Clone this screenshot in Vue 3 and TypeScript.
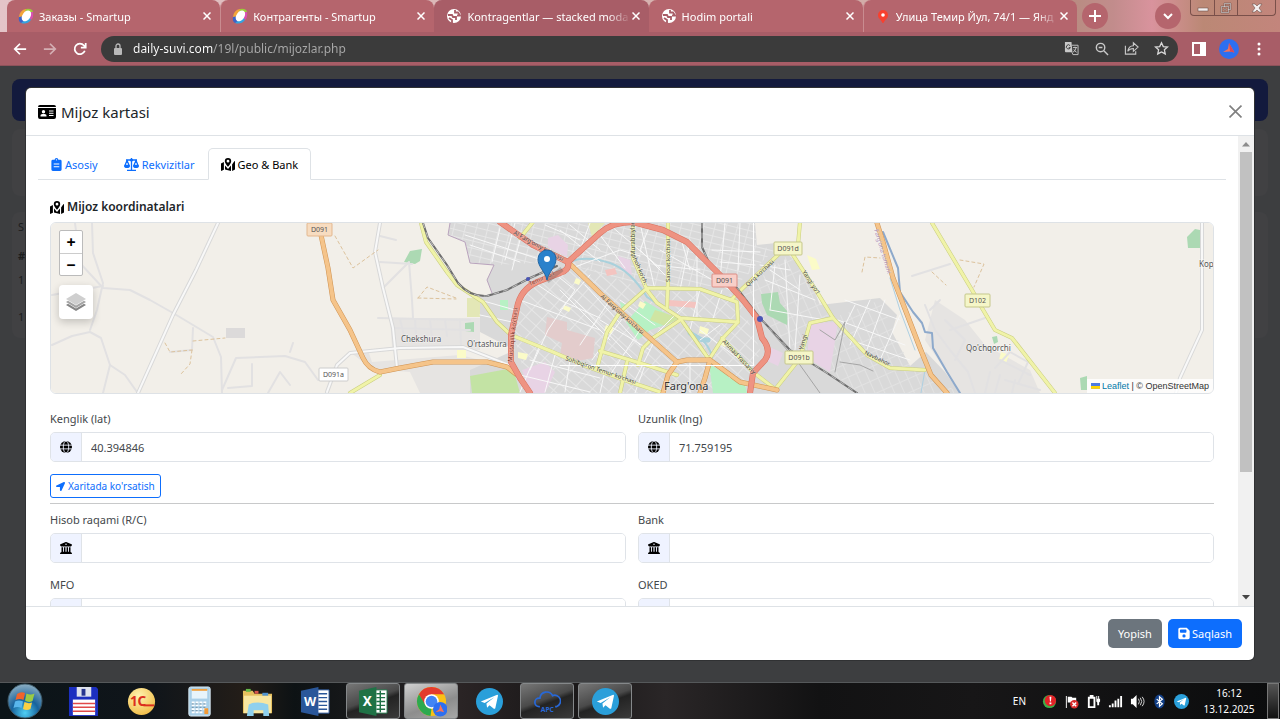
<script setup lang="ts">
import { ref } from 'vue'

interface BrowserTab { title: string; icon: 'smartup' | 'globe' | 'pin'; active?: boolean }
interface Shield { text: string; x: number; y: number; w: number; fill: string; stroke: string }
interface Street { text: string; x: number; y: number; angle: number; color?: string }

const browserTabs: BrowserTab[] = [
  { title: 'Заказы - Smartup', icon: 'smartup' },
  { title: 'Контрагенты - Smartup', icon: 'smartup' },
  { title: 'Kontragentlar — stacked moda', icon: 'globe', active: true },
  { title: 'Hodim portali', icon: 'globe' },
  { title: 'Улица Темир Йул, 74/1 — Янд', icon: 'pin' },
]

const url = ref('daily-suvi.com/19l/public/mijozlar.php')
const lat = ref('40.394846')
const lng = ref('71.759195')
const account = ref('')
const bank = ref('')
const mfo = ref('')
const oked = ref('')

const sections = [
  { id: 'main', label: 'Asosiy', icon: 'i-clipboard', w: 11 },
  { id: 'req', label: 'Rekvizitlar', icon: 'i-scale', w: 15 },
  { id: 'geo', label: 'Geo & Bank', icon: 'i-map', w: 14 },
]
const current = ref('geo')

const farmland = [
  'M92 223L93 253L103 283L97 310L90 330',
  'M75 223L80 263L103 288L130 290L150 300L173 313L213 337L221 357L222 393',
  'M52 345L72 336L90 332L101 338L110 365L125 375L137 392',
  'M110 365L103 393M52 295L103 286M193 328L192 350L170 352',
  'M222 390L236 358L285 356L305 362L318 380M252 364L252 386L228 388M268 393L280 372L290 385M290 352L293 343',
  'M383 288L409 262L412 300L413 318M380 262L412 264M380 236L396 240M378 318L470 320M400 319L405 340M415 319L416 336M430 320L432 338M445 320L447 336M460 320L461 345M392 328L470 330',
  'M912 276L950 264M995 368L1010 352L1028 362L1018 384M1000 360L1030 375M1005 380L1040 390M990 372L985 393M1000 375L995 393M1015 380L1012 393',
  'M925 305L935 330L950 350L968 372L975 393M945 320L965 340L955 360M930 345L945 365M930 310L940 300M950 330L985 318',
]
const whiteRoads = [
  'M218 223L196 270L173 315L138 393',
  'M380 223L375 252L383 288L393 328L397 368',
  'M327 392L337 365L350 353L400 348L463 347L512 366',
  'M1202 223V330L1180 378L1176 393',
]
const cityStreets = [
  'M470 245L520 262M465 235L548 262M500 228L492 262M520 240L512 270M538 285L560 300L600 318M520 300L600 330',
  'M555 274L575 290L548 330L530 370M575 267L620 250L640 256M590 223L577 258M600 235L625 268M610 225L660 268',
  'M640 223L655 290M650 225L640 250L665 275M655 265L700 270M680 235L690 270M690 240L680 290M697 255L697 320',
  'M700 289L690 330M722 290L712 322M660 250L730 290M712 250L760 252M720 262L755 265M725 223L720 280M740 223L738 270',
  'M585 285L640 345M575 300L632 358M590 275L560 310M610 300L580 345M625 315L592 360M640 330L610 375M655 340L635 380',
  'M560 290L610 340M620 300L655 325M600 320L650 350M650 340L690 300M690 362L690 392M700 340L720 325M700 330L740 360M690 335L730 378',
  'M540 345L520 392M555 355L545 392M570 360L565 392M530 360L600 378M520 375L590 392M605 370L600 393M645 365L635 393',
  'M770 270L800 290M765 280L815 300M785 260L790 350M800 275L795 350M770 310L825 320M760 265L790 270M775 265L770 310',
  'M845 300L900 320M838 320L905 345M850 340L910 360M855 305L840 335M870 300L850 345M885 300L865 355M900 315L880 360',
  'M480 300L515 310M480 315L512 322M515 223L505 260M570 225L600 250M560 230L600 262M545 225L580 240',
]
const yellowRoads = [
  'M421 223L426 242L447 272L457 285L483 302L497 322L511 335L553 352L583 365L633 383L663 393',
  'M520 238L533 222',
  'M380 375L350 393',
  'M633 222L633 258L647 290L657 303L680 318L738 322L737 302L700 289L647 288L620 312L607 332L602 350L597 368',
  'M668 222V282L667 308',
  'M680 318L708 358M738 322L723 338L710 358',
  'M680 320L653 338L643 348L638 365M600 351L640 363L677 375M627 362L620 393',
  'M731 300L743 288L780 253',
  'M800 222L798 245L793 255L817 292L833 318L867 355L890 368L925 370',
  'M833 318L810 323L800 358L777 387',
  'M722 338L753 372L775 389',
  'M932 223L972 290L982 308L995 330L1012 338L1037 370L1055 393',
]
const orangeRoads = [
  'M317 222L321 235L328 268L333 300L350 330L363 358Q368 369 380 372L400 368L433 362H487L507 367L516 374',
  'M571 265L600 293L643 332L677 362L687 360H710L740 382L777 390',
  'M677 362L668 375L663 393M710 360L705 378L700 393',
  'M877 223L883 242L893 278L910 322L920 348L931 375L947 393',
]
const redRoads = [
  'M500 222L533 245L568 262L600 233Q612 222 633 222L663 230L687 242L703 258L723 278L743 300L757 318L762 338Q772 350 765 360L753 373L750 393',
  'M568 262Q570 270 560 273L537 282Q520 290 517 308L511 335V362L520 378L530 393',
]
const railways = [
  'M423 223L428 238L447 265L458 283Q470 297 487 296L507 290L530 278L557 266',
  'M702 223V247L710 265L737 288L760 318L790 350L827 373L857 393',
]
const shields: Shield[] = [
  { text: 'D091', x: 307, y: 223, w: 25, fill: '#f7dcc0', stroke: '#e3b78e' },
  { text: 'D091a', x: 319, y: 368, w: 29, fill: '#fff', stroke: '#ccc' },
  { text: 'D091', x: 712, y: 274, w: 25, fill: '#f8cfc8', stroke: '#dc8d84' },
  { text: 'D091d', x: 774, y: 242, w: 28, fill: '#f5f6c8', stroke: '#c5c78b' },
  { text: 'D091b', x: 785, y: 351, w: 28, fill: '#f5f6c8', stroke: '#c5c78b' },
  { text: 'D102', x: 965, y: 294, w: 25, fill: '#f5f6c8', stroke: '#c5c78b' },
]
const streets: Street[] = [
  { text: "Al Farg'oniy ko'chasi", x: 513, y: 234, angle: 29 },
  { text: "Al Farg'oniy ko'chasi", x: 600, y: 297, angle: 42 },
  { text: "Mustaqillik ko'chasi", x: 512, y: 362, angle: -84, color: '#7d3226' },
  { text: "Temir Yo'l", x: 530, y: 286, angle: -24, color: '#7d3226' },
  { text: "Sohibqiron Temur ko'chasi", x: 565, y: 360, angle: 19 },
  { text: "Sanoat ko'chasi", x: 670, y: 282, angle: -90 },
  { text: 'Murabbiylar', x: 635, y: 256, angle: -91 },
  { text: "shoh ko'ch.", x: 632, y: 256, angle: 67 },
  { text: "Qirq ko'chasi", x: 748, y: 287, angle: -43 },
  { text: 'Ahmad Yassaviy', x: 722, y: 342, angle: 46 },
  { text: "Yangi yo'l", x: 802, y: 272, angle: 57 },
  { text: 'Yangi', x: 803, y: 350, angle: -75 },
  { text: 'Navbahor', x: 864, y: 354, angle: 26 },
  { text: "Farg'ona tumani", x: 874, y: 230, angle: 73, color: '#a98bb8' },
]
</script>

<template>
  <svg class="sprite" aria-hidden="true">
    <symbol id="i-idcard" viewBox="0 0 18 14">
      <path fill-rule="evenodd" d="M2 0h14a2 2 0 0 1 2 2H0a2 2 0 0 1 2-2zM0 3h18v9a2 2 0 0 1-2 2H2a2 2 0 0 1-2-2zM5.500 5a1.700 1.700 0 1 0 0 3.400 1.700 1.700 0 0 0 0-3.400zM2.500 11.500h6a2.200 2.200 0 0 0-2.200-2.400H4.700a2.200 2.200 0 0 0-2.200 2.400zM11 5.500v1h4.500v-1zM11 7.700v1h4.500v-1zM11 9.900v1h4.500v-1z" />
    </symbol>
    <symbol id="i-clipboard" viewBox="0 0 11 14">
      <path fill-rule="evenodd" d="M1.500 2h2a2 2 0 0 1 4 0h2A1.500 1.500 0 0 1 11 3.500v9A1.500 1.500 0 0 1 9.500 14h-8A1.500 1.500 0 0 1 0 12.500v-9A1.500 1.500 0 0 1 1.500 2zM5.500 1.300a.7.7 0 1 0 0 1.400.7.7 0 0 0 0-1.400zM2.500 6v1h6V6zM2.500 9v1h6V9z" />
    </symbol>
    <symbol id="i-scale" viewBox="0 0 15 13">
      <path fill="none" stroke="currentColor" stroke-width="1.300" d="M7.500 0v12M3 12.300h9M2 2h11M3 2.500L.9 7.500h4.300zM12 2.500L9.800 7.500h4.300z" />
      <path d="M0 7.500h6a3 2.600 0 0 1-6 0zM9 7.500h6a3 2.600 0 0 1-6 0z" /><circle cx="7.500" cy="2" r="1.600" />
    </symbol>
    <symbol id="i-map" viewBox="0 0 14 13">
      <path d="M0 5.500L2.900 4v7.800L.7 12.800a.5.5 0 0 1-.7-.4zM14 3.500v8L11.100 13V6.500l2.200-3.300a.5.500 0 0 1 .7.300z" />
      <path d="M4 7.500L7 11l3-3.500V13l-6-1.500z" />
      <path fill-rule="evenodd" d="M7 0a3.200 3.200 0 0 1 3.200 3.200C10.200 5 8 7.500 7 8.700 6 7.500 3.800 5 3.800 3.200A3.200 3.200 0 0 1 7 0zm0 1.800a1.400 1.400 0 1 0 0 2.800A1.400 1.400 0 0 0 7 1.800z" />
    </symbol>
    <symbol id="i-globe" viewBox="0 0 16 16">
      <circle cx="8" cy="8" r="8" /><g fill="none" stroke="#eff3ff" stroke-width="1.200"><ellipse cx="8" cy="8" rx="3.600" ry="8" /><path d="M0 5.500h16M0 10.500h16" /></g>
    </symbol>
    <symbol id="i-bank" viewBox="0 0 512 512">
      <path d="M243.400 2.600l-224 96c-14 6-21.800 21-18.700 35.800S16.800 160 32 160v8c0 13.300 10.700 24 24 24H456c13.300 0 24-10.700 24-24v-8c15.200 0 28.300-10.700 31.300-25.600s-4.800-29.900-18.700-35.800l-224-96c-8-3.400-17.200-3.400-25.200 0zM128 224H64V420.300c-.6 .3-1.200 .7-1.800 1.100l-48 32c-11.700 7.800-17 22.400-12.900 35.900S17.900 512 32 512H480c14.100 0 26.500-9.200 30.600-22.700s-1.100-28.100-12.900-35.900l-48-32c-.6-.4-1.200-.7-1.800-1.100V224H384V416H344V224H280V416H232V224H168V416H128V224zM256 64a32 32 0 1 1 0 64 32 32 0 1 1 0-64z" />
    </symbol>
    <symbol id="i-arrow" viewBox="0 0 512 512">
      <path d="M444.520 3.520L28.740 195.420c-47.970 22.390-31.980 92.750 19.190 92.750h175.910v175.910c0 51.170 70.360 67.170 92.750 19.190l191.900-415.780c15.990-38.390-25.590-79.970-63.970-63.970z" />
    </symbol>
    <symbol id="i-save" viewBox="0 0 448 512">
      <path d="M64 32C28.700 32 0 60.700 0 96V416c0 35.300 28.700 64 64 64H384c35.300 0 64-28.700 64-64V173.300c0-17-6.700-33.300-18.700-45.300L352 50.700C340 38.700 323.700 32 306.700 32H64zm0 96c0-17.700 14.300-32 32-32H288c17.700 0 32 14.300 32 32v64c0 17.700-14.300 32-32 32H96c-17.700 0-32-14.300-32-32V128zM224 288a64 64 0 1 1 0 128 64 64 0 1 1 0-128z" />
    </symbol>
    <symbol id="i-smartup" viewBox="0 0 16 16">
      <path fill="#f2a53a" d="M1 9A8 8 0 0 1 8 1l1 3-5 6z" /><path fill="#9ccb3b" d="M8 1q6-1 7 3l-4 2-4-2z" /><path fill="#d84fb0" d="M15 4q1 5-2 8l-3-3 2-5z" /><path fill="#35a3e0" d="M13 12q-4 5-10 3l3-5 5-1z" /><path fill="#3c63c8" d="M3 15q-3-2-2-6l5-1 1 4z" />
      <ellipse cx="8.300" cy="7.700" rx="4" ry="6" fill="#fff" transform="rotate(35 8 8)" />
    </symbol>
    <symbol id="i-world" viewBox="0 0 16 16">
      <circle cx="8" cy="8" r="7" fill="#fff" /><path fill="none" stroke="#a85d67" stroke-width="1.800" d="M2 7h4l1 2h3v3M6 15v-3L3 10M9 2v2.500h3l2 3h-3" />
    </symbol>
    <symbol id="i-pin" viewBox="0 0 16 16">
      <path fill="#f8402f" d="M8 2a5 5 0 0 1 5 5c0 4-3 4-4.500 8h-1C6 11 3 11 3 7a5 5 0 0 1 5-5z" /><circle cx="8" cy="7" r="1.800" fill="#fff" />
    </symbol>
    <symbol id="i-telegram" viewBox="0 0 28 28">
      <circle cx="14" cy="14" r="14" fill="#2a9fda" /><path fill="#fff" d="M5 14L22 7q1 0 .8 1L20 21q-.5 1-1.500.4L14 18l-2.500 2.500-.7-4.500L19 9.500 9 15.500z" />
    </symbol>
  </svg>

  <div class="screen">
    <header class="tabstrip">
      <div class="tabs" role="tablist" aria-label="Browser tabs">
        <div v-for="tab in browserTabs" :key="tab.title" class="tab" :class="{ active: tab.active }" role="tab" :aria-selected="!!tab.active">
          <svg class="favicon" aria-hidden="true"><use :href="tab.icon === 'smartup' ? '#i-smartup' : tab.icon === 'pin' ? '#i-pin' : '#i-world'" /></svg>
          <span class="tab-title">{{ tab.title }}</span>
          <button class="tab-close" aria-label="Close tab"><svg viewBox="0 0 8 8"><path d="M.5.500l7 7M7.500.500l-7 7" /></svg></button>
        </div>
      </div>
      <button class="round" aria-label="New tab"><svg viewBox="0 0 12 12"><path d="M6 0v12M0 6h12" /></svg></button>
      <div class="spacer"></div>
      <button class="round" aria-label="Search tabs"><svg viewBox="0 0 12 12"><path d="M2 4l4 4 4-4" /></svg></button>
      <div class="window-controls">
        <button aria-label="Minimize"><svg viewBox="0 0 12 12"><rect x="1" y="6" width="10" height="3" /></svg></button>
        <button aria-label="Restore"><svg viewBox="0 0 12 12"><path fill-rule="evenodd" d="M4 1h7v7H9v3H1V4h3zm1 1v2h4v3h1V2zM2 5v5h6V5zm2 2h2v1H4z" /></svg></button>
        <button class="wide" aria-label="Close"><svg viewBox="0 0 12 12"><path d="M1 2h3l2 2 2-2h3L8 6l3 4H8L6 8l-2 2H1l3-4z" /></svg></button>
      </div>
    </header>

    <nav class="toolbar" aria-label="Browser toolbar">
      <button class="nav" aria-label="Back"><svg viewBox="0 0 16 16"><path d="M15 8H2M8 2L2 8l6 6" /></svg></button>
      <button class="nav dim" aria-label="Forward"><svg viewBox="0 0 16 16"><path d="M1 8h13M8 2l6 6-6 6" /></svg></button>
      <button class="nav" aria-label="Reload"><svg viewBox="0 0 16 16"><path d="M13.500 10A6 6 0 1 1 12.500 4L14 6M14.500 1v5.500H9" /></svg></button>
      <div class="omnibox">
        <svg class="lock" viewBox="0 0 10 12" aria-hidden="true"><rect x="1" y="5" width="8" height="7" rx="1" fill="#b9b9b9" /><path d="M3 5V3a2 2 0 0 1 4 0v2" fill="none" stroke="#b9b9b9" stroke-width="1.300" /></svg>
        <input v-model="url" class="url" aria-label="Address" />
        <button aria-label="Translate"><svg viewBox="0 0 16 16"><path fill="#c8c8c8" d="M1 1h7l1 11H2a1 1 0 0 1-1-1z" /><path fill="none" stroke="#c8c8c8" d="M8.500 4.500H15v10H9.500L8.500 12" /><path fill="none" stroke="#3b3b3b" d="M6.500 5A2.200 2.200 0 1 0 6.800 7H5" /><path fill="none" stroke="#c8c8c8" d="M9.500 7h4.500M11.700 6v1M13 7q-1 4-3.500 5M10.500 9q1 2 3 3" /></svg></button>
        <button aria-label="Zoom"><svg viewBox="0 0 16 16"><g fill="none" stroke="#c8c8c8" stroke-width="1.500"><circle cx="7" cy="7" r="4.500" /><path d="M10.500 10.500L15 15M5 7h4" /></g></svg></button>
        <button aria-label="Share"><svg viewBox="0 0 16 16"><path fill="none" stroke="#c8c8c8" stroke-width="1.200" d="M1.500 5v9h11v-3M4 11q1-6 6-6V2l5 4.500L10 11V8Q6 8 4 11z" /></svg></button>
        <button aria-label="Bookmark"><svg viewBox="0 0 16 16"><path fill="none" stroke="#d8d8d8" stroke-width="1.400" d="M8 1.800l1.900 4.100 4.500.5-3.300 3 .9 4.400L8 11.600l-4 2.200.9-4.400-3.300-3 4.500-.5z" /></svg></button>
      </div>
      <button class="tool" aria-label="Side panel"><svg viewBox="0 0 14 14"><path fill="#fff" fill-rule="evenodd" d="M0 0h14v14H0zm2 2v10h6V2z" /></svg></button>
      <button class="tool avatar" aria-label="Profile"><svg viewBox="0 0 20 20"><circle cx="10" cy="10" r="10" fill="#2d6ff0" /><path fill="#f4725c" d="M10 4l5.500 9.500L11 12.500 4 13l5-3z" /><path fill="#d5485c" d="M10 4l1 8.500 4.500 1z" /></svg></button>
      <button class="tool menu" aria-label="Menu"><svg viewBox="0 0 14 14"><g fill="#fff"><circle cx="7" cy="2" r="1.500" /><circle cx="7" cy="7" r="1.500" /><circle cx="7" cy="12" r="1.500" /></g></svg></button>
    </nav>

    <main class="viewport">
      <div class="backdrop-page" aria-hidden="true">
        <div class="site-nav"></div>
        <div class="site-card"></div>
        <div class="site-card list"><span>S</span><span class="strong">#</span><span>1</span><span class="last">1</span></div>
      </div>

      <section class="modal" role="dialog" aria-labelledby="modal-title">
        <header class="modal-header">
          <svg class="id-icon" aria-hidden="true"><use href="#i-idcard" /></svg>
          <h1 id="modal-title">Mijoz kartasi</h1>
          <button class="close" aria-label="Close"><svg viewBox="0 0 12 12"><path d="M.5.500l11 11M11.500.500l-11 11" /></svg></button>
        </header>

        <div class="modal-middle">
          <div class="modal-body">
            <div class="section-tabs" role="tablist">
              <button v-for="s in sections" :key="s.id" role="tab" class="section-tab" :class="{ on: current === s.id }" :aria-selected="current === s.id" @click="current = s.id">
                <svg :style="{ width: s.w + 'px' }" aria-hidden="true"><use :href="'#' + s.icon" /></svg>{{ s.label }}
              </button>
            </div>

            <div class="pane">
              <h2><svg aria-hidden="true"><use href="#i-map" /></svg>Mijoz koordinatalari</h2>

              <div class="map">
                <svg class="map-art" viewBox="51 223 1162 170" preserveAspectRatio="xMidYMid slice" role="img" aria-label="Farg'ona">
                  <defs>
                    <pattern id="grid-a" width="11" height="7" patternUnits="userSpaceOnUse" patternTransform="rotate(14)"><path d="M0 .500h11M.5 0v7" stroke="#e6e6e6" fill="none" /></pattern>
                    <pattern id="grid-b" width="14" height="9" patternUnits="userSpaceOnUse" patternTransform="rotate(42)"><path d="M0 .500h14M.5 0v9" stroke="#e6e6e6" fill="none" /></pattern>
                    <pattern id="grid-c" width="9" height="13" patternUnits="userSpaceOnUse" patternTransform="rotate(-24)"><path d="M0 .500h9M.5 0v13" stroke="#e2e2e2" fill="none" /></pattern>
                  </defs>
                  <rect x="0" y="180" width="1280" height="260" fill="#f2efe9" />
                  <path fill="#e6e4e2" d="M390 318H480V350H368L372 362L460 355L512 368V393H420L410 372L372 369L350 352L392 347zM935 300L965 320L985 345L1030 370L1040 393H960L925 340z" />
                  <path fill="#d9d9d9" d="M450 223L448 235L465 242L470 263L494 265L487 280L492 293L480 297V332L515 350L470 370V393H960L945 372L926 352L910 366L892 332L897 315L880 298L820 305L807 272L776 243L757 245L755 223z" />
                  <path fill="url(#grid-a)" d="M450 223L448 235L465 242L470 263L494 265L560 262L645 286H735L775 250L757 245L755 223z" />
                  <path fill="url(#grid-b)" d="M545 278L575 262L645 290L738 295L760 350L750 393H530L515 340L520 300z" />
                  <path fill="url(#grid-c)" d="M740 295L790 253L833 318L880 300L910 366L960 393H860L770 330z" />
                  <path fill="#e8d3e5" d="M548 238L558 235L568 245L567 257L548 247zM810 323L838 322L830 372L807 358zM522 370L545 362L555 372L545 393H530zM765 345L783 353L778 366L765 360zM618 256L630 260L632 275L622 270z" />
                  <path fill="#e3cccc" d="M547 317L567 322V330L595 338L593 358L573 362L560 355L562 343L545 335z" />
                  <path fill="#f4c4c0" d="M669 300L696 302V308L669 306zM605 270L615 268L617 274L607 276z" />
                  <path fill="#acd9b3" d="M404 262L410 251L422 249L420 261L415 264zM465 323L474 322V332L465 331zM761 294L778 292L780 303L788 312L787 325L767 315L762 303zM1187 237L1195 229L1200 230V248H1188zM992 337L997 336L998 342L994 344zM1080 378L1087 376V390H1081z" />
                  <path fill="#c3e3a4" d="M470 376L513 368L520 393H472z" />
                  <path fill="#b7f1c4" d="M626 322L645 301L670 316L662 326L650 330L638 340zM709 364L745 385L747 393H713zM620 302L628 306L622 312zM500 300H508V310H500z" />
                  <path fill="#cfe5a3" d="M655 310L680 318L665 326L650 320z" />
                  <path fill="#fbfbc8" d="M606 325l8 3-3 6-7-3zM700 326l9 3-2 6-8-2zM640 301l6 3-3 5-5-3zM576 278l5 2-2 5-5-2zM564 305l7 3-2 4-6-3zM722 338l6 3-3 6-6-3zM457 350h9v8h-9zM518 352l10 2-2 6-8-2zM807 255l9 4 4 10-8 1zM1001 352l8 3-3 8-7-3z" />
                  <path fill="#e3e7b6" d="M467 298H480V317H467zM588 223H605L592 237z" />
                  <g class="lines">
                    <path v-for="d in farmland" :key="d" :d="d" stroke="#e2e1e2" stroke-width="2" />
                    <path d="M570 262Q585 255 610 263Q630 270 647 297Q662 308 678 316M689 332Q704 336 712 355V365" stroke="#a9d1dc" stroke-width="2" />
                    <path d="M690 333q8 8 18 7" stroke="#a9d1dc" stroke-width="5" />
                    <path d="M883 232L898 268L900 292L913 312L922 323L925 332L932 333L933 348L947 372L960 393" stroke="#8da9cb" stroke-width="2" />
                    <path d="M890 278L900 310L915 350M921 393L925 370" stroke="#aed0e2" stroke-width="1" />
                    <path v-for="d in cityStreets" :key="d" :d="d" stroke="#f8f8f8" stroke-width="1" />
                    <path v-for="d in whiteRoads" :key="'c' + d" :d="d" stroke="#d8d8d8" stroke-width="4" />
                    <path v-for="d in whiteRoads" :key="d" :d="d" stroke="#f8f8f8" stroke-width="2" />
                    <path v-for="d in yellowRoads" :key="'c' + d" :d="d" stroke="#c9cd80" stroke-width="4" />
                    <path v-for="d in yellowRoads" :key="d" :d="d" stroke="#f0f3a8" stroke-width="3" />
                    <path v-for="d in railways" :key="'c' + d" :d="d" stroke="#6d6d6d" stroke-width="2" />
                    <path v-for="d in railways" :key="d" :d="d" stroke="#bbb" stroke-width="1" stroke-dasharray="5 5" />
                    <path d="M770 330L800 365L820 393M820 330L835 340L845 322L835 372M840 362L860 365L873 371" stroke="#a5a5a5" stroke-width="1" />
                    <path v-for="d in orangeRoads" :key="'c' + d" :d="d" stroke="#cf9353" stroke-width="5" />
                    <path v-for="d in orangeRoads" :key="d" :d="d" stroke="#f5c48a" stroke-width="4" />
                    <path v-for="d in redRoads" :key="'c' + d" :d="d" stroke="#d9705f" stroke-width="6" />
                    <path v-for="d in redRoads" :key="d" :d="d" stroke="#ee9382" stroke-width="5" />
                    <path d="M450 223L448 235L465 242L470 263L494 265L487 280L492 293" stroke="#b9a3bd" stroke-width="1" />
                    <path d="M335 236L353 268L378 250M418 298L427 287L456 298M418 298L456 299M193 341L225 338M192 350L190 364L181 374M165 343L170 352L192 350M932 272L946 285M960 260L984 264L974 287M862 272L865 257L880 258" stroke="#dcc29c" stroke-width="1" stroke-dasharray="3 3" />
                    <path d="M753.500 223V365.500M560 365.500H753.500" stroke="#fff" stroke-width="1" />
                  </g>
                  <rect x="226" y="328" width="19" height="10" fill="#dcdada" />
                  <g fill="#4a55b5"><circle cx="528" cy="279" r="2" /><circle cx="760" cy="319" r="3" /></g>
                  <g class="streets">
                    <text v-for="s in streets" :key="s.text + s.x" :x="s.x" :y="s.y" :fill="s.color ?? '#444'" :transform="`rotate(${s.angle} ${s.x} ${s.y})`">{{ s.text }}</text>
                  </g>
                  <g v-for="s in shields" :key="s.text + s.x">
                    <rect :x="s.x" :y="s.y" :width="s.w" height="13" rx="1" :fill="s.fill" :stroke="s.stroke" />
                    <text class="shield" :x="s.x + s.w / 2" :y="s.y + 9" text-anchor="middle">{{ s.text }}</text>
                  </g>
                  <g class="places">
                    <text x="401" y="342">Chekshura</text>
                    <text x="467" y="347">O'rtashura</text>
                    <text x="966" y="351">Qo'chqorchi</text>
                    <text x="1199" y="267">Kop</text>
                    <text x="664" y="390" class="city">Farg'ona</text>
                  </g>
                  <path d="M547 281L562 269" stroke="#555" stroke-opacity=".3" stroke-width="5" />
                  <path fill="#2a81cb" stroke="#2468a5" d="M547 280C545 271 538 267 538 259a9 9 0 0 1 18 0c0 8-7 12-9 21z" /><circle cx="547" cy="259" r="3" fill="#fff" />
                </svg>
                <div class="map-controls">
                  <div class="zoom"><button aria-label="Zoom in">+</button><button aria-label="Zoom out">−</button></div>
                  <button class="layers" aria-label="Layers"><svg viewBox="0 0 20 20"><path fill="#858585" d="M0 13l10 6 10-6-2-1.200-8 4.700-8-4.700z" /><path fill="#a5a5a5" d="M0 10l10 6 10-6-2-1.200-8 4.700-8-4.700z" /><path fill="#cfcfcf" d="M10 1l10 6-10 6L0 7z" /></svg></button>
                </div>
                <div class="attribution"><svg viewBox="0 0 12 8"><path fill="#4c7be1" d="M0 0h12v4H0z" /><path fill="#ffd500" d="M0 4h12v3H0z" /><path fill="#e0bc00" d="M0 7h12v1H0z" /></svg><a href="#leaflet">Leaflet</a> | © OpenStreetMap</div>
              </div>

              <div class="row coords">
                <div class="field"><label for="lat">Kenglik (lat)</label><div class="group"><span><svg><use href="#i-globe" /></svg></span><input id="lat" v-model="lat" /></div></div>
                <div class="field"><label for="lng">Uzunlik (lng)</label><div class="group"><span><svg><use href="#i-globe" /></svg></span><input id="lng" v-model="lng" /></div></div>
              </div>
              <button class="show-map"><svg aria-hidden="true"><use href="#i-arrow" /></svg>Xaritada ko'rsatish</button>
              <hr />
              <div class="row">
                <div class="field"><label for="acc">Hisob raqami (R/C)</label><div class="group"><span><svg><use href="#i-bank" /></svg></span><input id="acc" v-model="account" /></div></div>
                <div class="field"><label for="bank">Bank</label><div class="group"><span><svg><use href="#i-bank" /></svg></span><input id="bank" v-model="bank" /></div></div>
                <div class="field"><label for="mfo">MFO</label><div class="group"><span></span><input id="mfo" v-model="mfo" /></div></div>
                <div class="field"><label for="oked">OKED</label><div class="group"><span></span><input id="oked" v-model="oked" /></div></div>
              </div>
            </div>
          </div>
          <div class="scrollbar" aria-hidden="true">
            <svg viewBox="0 0 8 5"><path d="M0 4.500L4 0l4 4.500z" fill="#8c8c8c" /></svg>
            <div class="track"><div class="thumb"></div></div>
            <svg viewBox="0 0 8 5"><path d="M0 0l4 4.500L8 0z" fill="#444" /></svg>
          </div>
        </div>

        <footer class="modal-footer">
          <button class="btn gray">Yopish</button>
          <button class="btn blue"><svg aria-hidden="true"><use href="#i-save" /></svg>Saqlash</button>
        </footer>
      </section>
    </main>

    <footer class="taskbar">
      <button class="app start" aria-label="Start">
        <svg viewBox="0 0 36 36"><defs><radialGradient id="orb" cx=".5" cy=".85" r=".9"><stop offset="0" stop-color="#4fd0f5" /><stop offset=".45" stop-color="#17629c" /><stop offset="1" stop-color="#9bb8c8" /></radialGradient></defs>
          <circle cx="18" cy="18" r="17" fill="url(#orb)" stroke="#3c5967" />
          <path fill="#f0642c" d="M10 11q4-3 8-1l-1.500 7q-4-2-8 0z" /><path fill="#9acb45" d="M19.500 10.500q4 2 8 0l-2 7.500q-4 2-7.500-.5z" /><path fill="#59b6ec" d="M8 18.500q4-2 8 0L14.500 25q-4-2-8 0z" /><path fill="#fbd143" d="M17.500 19q4 2 7.500.5L23.500 26q-4 2-7.500 0z" />
        </svg>
      </button>
      <button class="app" aria-label="Total Commander">
        <svg viewBox="0 0 32 32"><path fill="#1c2fc0" d="M1 1h28l2 2v28H1z" /><path fill="#dfe3ee" d="M9 1h15v10H9z" /><path fill="#26348f" d="M14 3h4v7h-4z" /><path fill="#fff" d="M5 14h23v16H5z" /><path stroke="#e04a4a" stroke-width="1.500" d="M5 18h23M5 22h23M5 26h23" /></svg>
      </button>
      <button class="app" aria-label="1C">
        <svg viewBox="0 0 32 32"><defs><radialGradient id="gold" cx=".4" cy=".3" r=".8"><stop offset="0" stop-color="#fff3b0" /><stop offset="1" stop-color="#efb840" /></radialGradient></defs><circle cx="16" cy="16" r="14" fill="url(#gold)" /><text x="4" y="21" font-size="14" font-weight="700" fill="#dc2f1e">1С</text><path stroke="#dc2f1e" stroke-width="2" d="M18 20h11" /></svg>
      </button>
      <button class="app" aria-label="Calculator">
        <svg viewBox="0 0 32 32"><rect x="5" y="1" width="22" height="30" rx="2" fill="#a9cfe8" stroke="#dcebf5" /><rect x="8" y="4" width="16" height="9" fill="#e8f4fb" /><path stroke="#f0a040" stroke-width="2" d="M8 4h16" /><g stroke="#fff" stroke-width="2" stroke-dasharray="3 1"><path d="M8 17h16M8 20h16M8 24h16M8 27h12" /></g><path fill="#f39a35" d="M21 23h4v6h-4z" /><path stroke="#6d8ba0" stroke-dasharray="2 2" d="M8 18.500h15M8 22h15M8 25.500h12" /></svg>
      </button>
      <button class="app" aria-label="Explorer">
        <svg viewBox="0 0 32 32"><path fill="#e6c15f" d="M1 5h10l2 3h18v20H1z" /><path fill="#f7e6a1" d="M2 10h28v18H2z" /><path fill="#64b748" d="M4 3h5v3H4z" /><path fill="#d8574b" d="M13 5h4v3h-4z" /><path fill="#4f93cf" d="M21 7h6v3h-6z" /><path fill="#8fd0ee" d="M7 19q9-4 20 0l1 12h-6v-6H12v6H5z" /></svg>
      </button>
      <button class="app" aria-label="Word">
        <svg viewBox="0 0 32 32"><path fill="#fff" stroke="#2a579a" d="M16 4h14v24H16z" /><path stroke="#2a579a" stroke-width="1.500" d="M19 8h9M19 12h9M19 16h9M19 20h9M19 24h9" /><path fill="#2a579a" d="M1 5l18-4v30L1 27z" /><text x="4" y="21" font-size="13" font-weight="700" fill="#fff">W</text></svg>
      </button>
      <button class="app open" aria-label="Excel">
        <svg viewBox="0 0 32 32"><path fill="#fff" stroke="#1f7246" d="M16 4h14v24H16z" /><path stroke="#1f7246" stroke-width="1.500" d="M19 8h9M19 12h9M19 16h9M19 20h9M19 24h9M23 5v22" /><path fill="#1f7246" d="M1 5l18-4v30L1 27z" /><text x="5" y="21" font-size="14" font-weight="700" fill="#fff">X</text></svg>
      </button>
      <button class="app open bright" aria-label="Chrome">
        <svg viewBox="0 0 32 32"><circle cx="16" cy="16" r="15" fill="#fbc116" /><path fill="#e33b2e" d="M3 8.500A15 15 0 0 1 29 8.500H16L9 20z" /><path fill="#2da94f" d="M3 8.500L10 20l6 3.500L15 31A15 15 0 0 1 3 8.500z" /><circle cx="16" cy="16" r="7.500" fill="#fff" /><circle cx="16" cy="16" r="6" fill="#4285f4" /><circle cx="25" cy="24" r="7.500" fill="#2d6ff0" /><path fill="#f4725c" d="M25 19l4 8-4-1-5 1 4-3z" /></svg>
      </button>
      <button class="app" aria-label="Telegram"><svg class="small"><use href="#i-telegram" /></svg></button>
      <button class="app open" aria-label="APC">
        <svg class="small" viewBox="0 0 32 32"><path fill="none" stroke="#2768d8" stroke-width="2" d="M7 22H6a5 5 0 0 1 0-10h1a8 8 0 0 1 15-3 6.500 6.500 0 0 1 5 13h-2" /><text x="8" y="28" font-size="8" font-weight="700" fill="#2768d8">APC</text></svg>
      </button>
      <button class="app open" aria-label="Telegram"><svg class="small"><use href="#i-telegram" /></svg></button>
      <div class="spacer"></div>
      <span class="lang">EN</span>
      <div class="tray">
        <svg viewBox="0 0 16 16"><circle cx="8" cy="8" r="7" fill="#3fae49" /><circle cx="9" cy="7" r="6" fill="#e32227" /><path fill="#fff" d="M8 3h2l-.5 5h-1zM8 9h2v2H8z" /></svg>
        <svg viewBox="0 0 16 16"><path fill="#fff" d="M2 2h1v13H2zM4 3h4l1 1h4v6H8L7 9H4z" /><circle cx="11" cy="11" r="4.500" fill="#d92b2b" /><path stroke="#fff" stroke-width="1.500" d="M9 9l4 4M13 9l-4 4" /></svg>
        <svg viewBox="0 0 16 16"><path fill="#fff" fill-rule="evenodd" d="M2 3h2V1h4v2h2v12H2zm2 2v8h4V5zM11 2h1v3h1V2h1v3h1v3l-1 1v3h-2V9l-1-1z" /></svg>
        <svg viewBox="0 0 16 16"><path fill="#fff" d="M1 12h2v2H1zM4 10h2v4H4zM7 7h2v7H7zM10 5h2v9h-2zM13 2h2v12h-2z" /></svg>
        <svg viewBox="0 0 16 16"><path fill="#fff" d="M1 5h2l4-4v14l-4-4H1z" /><path fill="none" stroke="#ddd" d="M9 5q2 3 0 6M11 4q3 4 0 8M13 3q4 5 0 10" /></svg>
        <svg viewBox="0 0 16 16"><ellipse cx="8" cy="8" rx="5.500" ry="7.500" fill="#123f86" /><path fill="none" stroke="#fff" stroke-width="1.300" d="M5 5.500l6 5L8 13V3l3 2.500-6 5" /></svg>
        <svg><use href="#i-telegram" /></svg>
      </div>
      <div class="clock"><span>16:12</span><span>13.12.2025</span></div>
      <button class="desktop" aria-label="Show desktop"></button>
    </footer>
  </div>
</template>

<style>
body { margin: 0; }
</style>

<style scoped>
* { box-sizing: border-box; }
.sprite { position: absolute; width: 0; height: 0; overflow: hidden; }
.screen { display: flex; flex-direction: column; height: 100vh; overflow: hidden; font-family: "Noto Sans", "Open Sans", sans-serif; font-size: 11px; color: #212529; background: #3d3e40; }
button { font: inherit; padding: 0; border: 0; background: none; color: inherit; display: flex; align-items: center; justify-content: center; }
button svg, .tray svg { display: block; }
.spacer { flex: 1; }

.tabstrip { display: flex; flex: none; height: 32px; padding: 0 4px 0 7px; background: linear-gradient(90deg, #e4c4c8 0, #cfa9a3 78%, #b98c82 84%, #c28c8c 87%, #d9939d 90%, #bb8875 94%, #c3857c 100%); }
.tabs { display: flex; flex: 0 1 1070px; min-width: 0; }
.tab { display: flex; align-items: center; flex: 1; min-width: 0; padding: 0 8px 0 11px; border-radius: 8px 8px 0 0; background: #b5656d; color: #fff; }
.tab + .tab { border-left: 1px solid #c98c90; }
.tab.active { background: #a85d67; border-left-color: #a85d67; }
.tab.active + .tab { border-left-color: #b5656d; }
.favicon { width: 16px; height: 16px; flex: none; margin-right: 5px; }
.tab-title { flex: 1; overflow: hidden; white-space: nowrap; -webkit-mask-image: linear-gradient(90deg, #000 86%, transparent); mask-image: linear-gradient(90deg, #000 86%, transparent); }
.tab-close { width: 10px; height: 16px; flex: none; }
.tab-close svg { width: 8px; height: 8px; fill: none; stroke: #fff; stroke-width: 1.500; }
.round { flex: none; align-self: center; width: 26px; height: 26px; margin-left: 5px; border-radius: 50%; background: #b5656d; }
.round svg { width: 12px; height: 12px; fill: none; stroke: #fff; stroke-width: 2; }
.window-controls { display: flex; height: 16px; margin-left: 9px; border: 1px solid #7a504a; border-top: 0; border-radius: 0 0 4px 4px; }
.window-controls button { width: 23px; }
.window-controls button + button { border-left: 1px solid #7a504a; }
.window-controls .wide { width: 38px; }
.window-controls svg { width: 12px; height: 12px; fill: #f4eeee; stroke: #5b4441; stroke-width: .5; }

.toolbar { display: flex; align-items: center; flex: none; height: 34px; padding: 0 10px 0 5px; background: #a85d67; border-bottom: 1px solid #8d525a; }
.nav { width: 30px; height: 30px; }
.nav svg { width: 14px; height: 14px; fill: none; stroke: #fff; stroke-width: 2; }
.nav.dim { opacity: .5; }
.omnibox { display: flex; align-items: center; flex: 1; height: 26px; margin: 0 10px 0 6px; padding: 0 2px 0 12px; border-radius: 13px; background: #3b3b3b; }
.lock { width: 10px; height: 12px; margin-right: 10px; }
.url { flex: 1; min-width: 0; height: 20px; padding: 0; border: 0; outline: 0; font: inherit; font-size: 12px; color: transparent; background: linear-gradient(90deg, #fff 80px, #aaa 80px); -webkit-background-clip: text; background-clip: text; }
.omnibox button { width: 30px; height: 26px; }
.omnibox button svg { width: 15px; height: 15px; }
.tool { width: 22px; height: 26px; margin-right: 8px; }
.tool svg { width: 14px; height: 14px; }
.avatar svg { width: 20px; height: 20px; }
.menu { margin: 0; }

.viewport { position: relative; flex: 1; min-height: 0; overflow: hidden; }
.backdrop-page { display: flex; flex-direction: column; height: 100%; padding: 13px 12px 0; color: #1c1d1e; }
.site-nav { flex: none; height: 42px; border-radius: 8px; background: #131a3d; }
.site-card { flex: none; height: 67px; margin-top: 8px; border-radius: 8px; background: #414143; }
.list { display: flex; flex-direction: column; height: 126px; margin-top: 16px; padding: 6px; }
.list span { line-height: 18px; margin-bottom: 11px; }
.list .strong { font-weight: 700; margin-bottom: 6px; }
.list .last { margin-top: 8px; }

.modal { position: absolute; inset: 22px 26px; display: flex; flex-direction: column; border-radius: 5px; background: #fff; overflow: hidden; box-shadow: 0 0 0 1px #303133; }
.modal-header { display: flex; align-items: center; flex: none; height: 48px; padding: 0 12px; border-bottom: 1px solid #dee2e6; }
.id-icon { width: 18px; height: 14px; margin-right: 5px; }
h1 { flex: 1; margin: 0; font-size: 15px; line-height: 20px; font-weight: 400; }
.close svg { width: 13px; height: 13px; fill: none; stroke: #808080; stroke-width: 1.500; }
.modal-middle { display: flex; flex: 1; min-height: 0; }
.modal-body { flex: 1; min-width: 0; padding: 12px 12px 0; overflow: hidden; }
.section-tabs { display: flex; height: 32px; border-bottom: 1px solid #dee2e6; }
.section-tab { height: 32px; padding: 0 12px; border: 1px solid transparent; border-radius: 5px 5px 0 0; color: #0d6efd; }
.section-tab svg { height: 13px; margin-right: 3px; fill: currentColor; }
.section-tab.on { border-color: #dee2e6 #dee2e6 #fff; background: #fff; color: #000; }
.pane { padding: 18px 12px 0; }
h2 { display: flex; align-items: center; margin: 0 0 6px; font-size: 12px; line-height: 18px; font-weight: 600; }
h2 svg { width: 14px; height: 13px; margin-right: 3px; }

.map { position: relative; height: 172px; border: 1px solid #dee2e6; border-radius: 6px; overflow: hidden; }
.map-art { display: block; width: 100%; height: 100%; }
.lines { fill: none; stroke-linejoin: round; stroke-linecap: round; }
.streets text { font-size: 6px; stroke: #fff; stroke-width: 1px; stroke-opacity: .3; paint-order: stroke; }
.shield { font-size: 7px; fill: #555; }
.places text { font-size: 8px; fill: #555; stroke: #fff; stroke-width: 1px; stroke-opacity: .6; paint-order: stroke; }
.places .city { font-size: 11px; fill: #333; }
.map-controls { position: absolute; left: 8px; top: 7px; }
.zoom { width: 24px; border: 1px solid #bbb; border-radius: 2px; background: #fff; overflow: hidden; }
.zoom button { width: 100%; height: 22px; font-size: 16px; line-height: 20px; font-weight: 700; color: #000; }
.zoom button + button { border-top: 1px solid #ccc; }
.layers { width: 34px; height: 34px; margin-top: 9px; border-radius: 4px; background: #fff; box-shadow: 0 3px 8px #0003; }
.layers svg { width: 20px; height: 20px; }
.attribution { position: absolute; right: 0; bottom: 0; padding: 0 4px; background: #fffc; font-family: "Liberation Sans", Arial, sans-serif; font-size: 9px; line-height: 14px; white-space: nowrap; color: #333; }
.attribution svg { width: 9px; height: 6px; margin-right: 2px; }
.attribution a { color: #0078a8; text-decoration: none; }

.row { display: grid; grid-template-columns: 1fr 1fr; gap: 13px 12px; }
.coords { margin-top: 16px; }
label { display: block; line-height: 18px; margin-bottom: 4px; color: #43474b; }
.group { display: flex; height: 30px; border: 1px solid #dfe3e8; border-radius: 5px; overflow: hidden; }
.group span { flex: none; width: 31px; display: flex; align-items: center; justify-content: center; border-right: 1px solid #dfe3e8; background: #eff3ff; }
.group svg { width: 12px; height: 12px; }
.group input { flex: 1; min-width: 0; padding: 0 9px; border: 0; outline: 0; font: inherit; color: #43474b; background: #fff; }
.show-map { height: 24px; margin-top: 12px; padding: 0 5px; border: 1px solid #0d6efd; border-radius: 3px; font-size: 10px; color: #0d6efd; }
.show-map svg { width: 9px; height: 9px; margin-right: 3px; fill: currentColor; }
hr { height: 1px; margin: 5px 0 7px; border: 0; background: #c8c9ca; }

.scrollbar { display: flex; flex-direction: column; align-items: center; width: 16px; padding: 6px 0; background: #f1f1f1; }
.scrollbar svg { width: 8px; height: 5px; }
.track { flex: 1; width: 12px; margin: 5px 0; }
.thumb { height: 73%; background: #c1c1c1; }
.modal-footer { display: flex; align-items: center; justify-content: flex-end; gap: 6px; flex: none; height: 54px; padding: 0 12px; border-top: 1px solid #dee2e6; }
.btn { height: 29px; padding: 0 10px; border-radius: 5px; color: #fff; }
.btn svg { width: 12px; height: 13px; margin-right: 2px; fill: #fff; }
.gray { background: #6c757d; }
.blue { background: #0d6efd; }

.taskbar { display: flex; align-items: center; flex: none; height: 37px; border-top: 1px solid #55585a; background: linear-gradient(90deg, #0b1418 0, #10151a 12%, #231d18 19%, #0d1214 23%, #2a2425 36%, #191718 44%, #2a2627 52%, #121213 64%, #171617 76%, #0b0c0d 100%); color: #fff; }
.app { flex: none; width: 50px; height: 36px; margin: 0 4px; border-radius: 3px; }
.app svg { width: 31px; height: 31px; }
.app svg.small { width: 27px; height: 27px; }
.app.start { margin-left: 0; }
.start svg { width: 36px; height: 36px; }
.open { width: 54px; margin: 0 2px; border: 1px solid #85888a; background: linear-gradient(160deg, #777 0, #4a4a4a 45%, #232323 55%, #3a3a3a); }
.bright { background: linear-gradient(160deg, #d0d0d0, #8d8d8d 60%, #a8a8a8); }
.lang { margin-right: 16px; font-size: 10px; }
.tray { display: flex; gap: 7px; margin-right: 2px; }
.tray svg { width: 15px; height: 15px; }
.clock { display: flex; flex-direction: column; align-items: center; width: 76px; font-size: 10px; line-height: 16px; }
.desktop { width: 12px; height: 36px; margin-right: 1px; border: 1px solid #777; background: linear-gradient(#555, #111); }
</style>
